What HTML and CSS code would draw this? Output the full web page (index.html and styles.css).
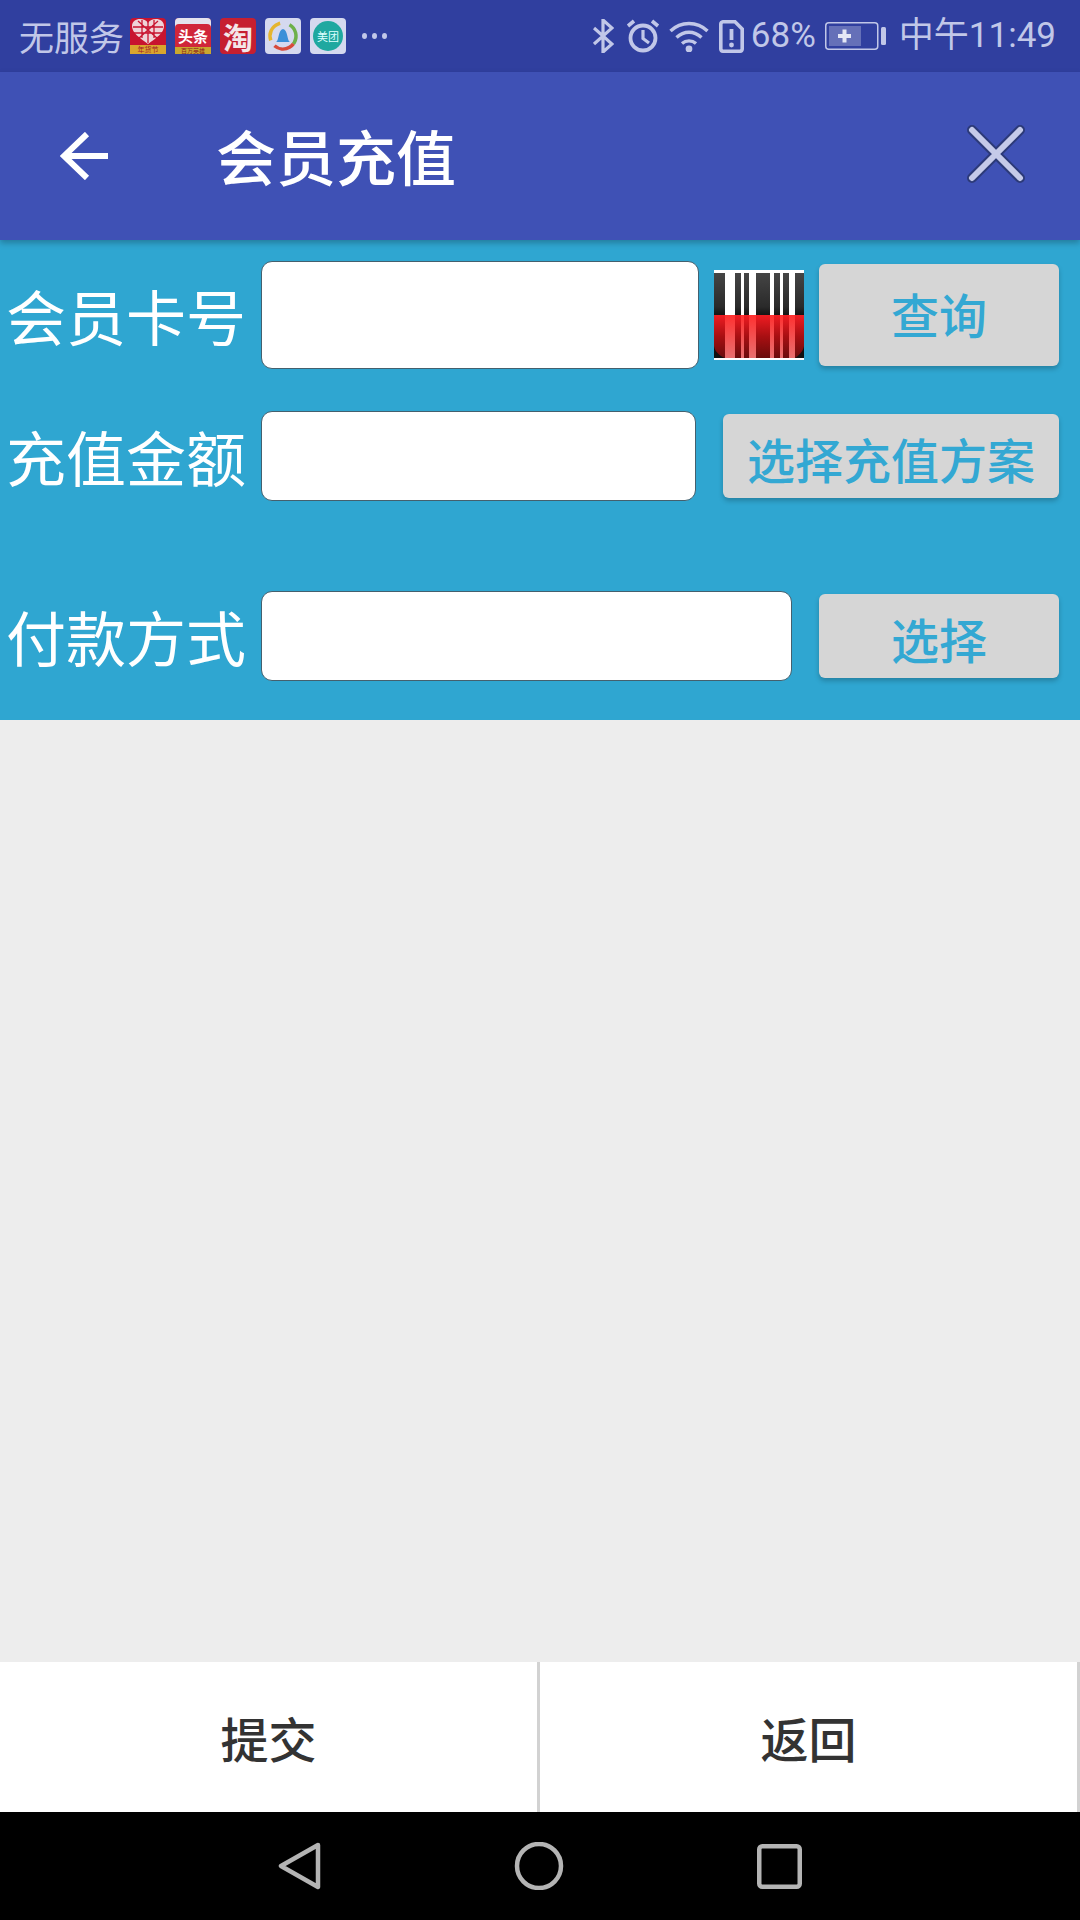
FILE: index.html
```html
<!DOCTYPE html>
<html lang="zh">
<head>
<meta charset="utf-8">
<title>会员充值</title>
<link rel="stylesheet" href="styles.css">
</head>
<body>
<div class="app">
  <header class="status">
    <div class="status-left">
      <span class="carrier">无服务</span>
      <div class="apps">
        <div class="app-icon ic-heart">
          <svg class="heart" viewBox="0 0 36 27"><path d="M18 26C10 20 2 15 2 8C2 3.500 6 1 10 1C13.500 1 16.500 2.500 18 5C19.500 2.500 22.500 1 26 1C30 1 34 3.500 34 8C34 15 26 20 18 26Z" fill="#efd3d8"/><path d="M18 3V25M3 9H33M8 3L28 21M28 3L8 21M3 15H33M12 2V20M24 2V20" stroke="#c8142f" stroke-width="1.300" fill="none"/></svg>
          <span class="heart-strip">年货节</span>
        </div>
        <div class="app-icon ic-toutiao">
          <span class="tt-main">头条</span>
          <span class="tt-strip">百万英雄</span>
        </div>
        <div class="app-icon ic-taobao"><span>淘</span></div>
        <div class="app-icon ic-news">
          <svg viewBox="0 0 36 36"><circle cx="18" cy="18" r="13" fill="none" stroke="#6db04a" stroke-width="3.500" stroke-dasharray="22 60" transform="rotate(-60 18 18)"/><circle cx="18" cy="18" r="13" fill="none" stroke="#e5b52f" stroke-width="3.500" stroke-dasharray="22 60" transform="rotate(160 18 18)"/><circle cx="18" cy="18" r="13" fill="none" stroke="#d84a3a" stroke-width="3.500" stroke-dasharray="16 60" transform="rotate(60 18 18)"/><path d="M11 24C14 23 13 12 18 11C23 12 22 23 25 24Z" fill="#3a8fd8"/></svg>
        </div>
        <div class="app-icon ic-meituan"><span class="mt-disc">美团</span></div>
      </div>
      <div class="dots"><i></i><i></i><i></i></div>
    </div>
    <div class="status-right">
      <svg class="s-bt" viewBox="0 0 21 34"><path d="M1 9L19 25L10 33V1L19 9L1 25" fill="none" stroke="#c1c7e8" stroke-width="3.200"/></svg>
      <svg class="s-alarm" viewBox="0 0 34 34"><circle cx="17" cy="19" r="12.500" fill="none" stroke="#c1c7e8" stroke-width="3.800"/><path d="M17 11V19.500L23 24" fill="none" stroke="#c1c7e8" stroke-width="3.200"/><path d="M2 7L8 2M32 7L26 2" stroke="#c1c7e8" stroke-width="3.600" fill="none"/></svg>
      <svg class="s-wifi" viewBox="0 0 40 32"><path d="M1.500 11C12 1 28 1 38.500 11M7.500 17.500C15 10.500 25 10.500 32.500 17.500M13 23.500C17 20 23 20 27 23.500" fill="none" stroke="#c1c7e8" stroke-width="3.400"/><circle cx="20" cy="29" r="3.400" fill="#c1c7e8"/></svg>
      <svg class="s-sim" viewBox="0 0 25 33"><path d="M1.800 4A2.500 2.500 0 0 1 4 1.800H16L23.200 9V29A2.500 2.500 0 0 1 21 31.200H4A2.500 2.500 0 0 1 1.800 29Z" fill="none" stroke="#c1c7e8" stroke-width="3.600"/><path d="M12.500 9V20" stroke="#c1c7e8" stroke-width="3.800"/><circle cx="12.500" cy="25" r="2.400" fill="#c1c7e8"/></svg>
      <span class="s-pct">68%</span>
      <svg class="s-batt" viewBox="0 0 61 28"><rect x="0.750" y="0.750" width="52" height="26.500" rx="3" fill="none" stroke="#c1c7e8" stroke-width="1.500"/><rect x="4" y="4" width="32" height="20" fill="#6570b8"/><path d="M19.500 7.500V20.500M13 14H26" stroke="#e4e7f6" stroke-width="4"/><rect x="56" y="5" width="5" height="18" rx="1.500" fill="#c1c7e8"/></svg>
      <span class="s-time">中午11:49</span>
    </div>
  </header>

  <div class="toolbar">
    <svg class="back" viewBox="0 0 48 48"><path d="M27 2L4 24L27 46M4 24H48" fill="none" stroke="#fff" stroke-width="6"/></svg>
    <h1 class="title">会员充值</h1>
    <svg class="close" viewBox="0 0 58 58"><path d="M5 5L53 53M53 5L5 53" fill="none" stroke="#2c3a78" stroke-width="10" stroke-linecap="round"/><path d="M5 5L53 53M53 5L5 53" fill="none" stroke="#c5cae9" stroke-width="6" stroke-linecap="round"/></svg>
  </div>

  <section class="form">
    <div class="row row-card">
      <label class="label">会员卡号</label>
      <input class="field field-card" type="text">
      <svg class="barcode" viewBox="0 0 90 90">
        <defs>
          <linearGradient id="barTop" x1="0" y1="0" x2="0" y2="1"><stop offset="0" stop-color="#454545"/><stop offset="0.800" stop-color="#2a2a2a"/><stop offset="1" stop-color="#141414"/></linearGradient>
          <linearGradient id="barRed" x1="0" y1="0" x2="0" y2="1"><stop offset="0" stop-color="#f01c22"/><stop offset="0.500" stop-color="#a80f12"/><stop offset="1" stop-color="#6a0c0c"/></linearGradient>
          <linearGradient id="pink" x1="0" y1="0" x2="0" y2="1"><stop offset="0" stop-color="#ff3030"/><stop offset="1" stop-color="#e87070"/></linearGradient>
        </defs>
        <rect width="90" height="90" fill="#fff"/>
        <g class="bars">
          <g fill="url(#barTop)">
            <rect y="3" width="11" height="42"/><rect x="21" y="3" width="6" height="42"/><rect x="30" y="3" width="5" height="42"/><rect x="42" y="3" width="14" height="42"/><rect x="60" y="3" width="6" height="42"/><rect x="69" y="3" width="6" height="42"/><rect x="81" y="3" width="9" height="42"/>
          </g>
          <rect y="45" width="90" height="43" fill="url(#pink)"/>
          <g fill="url(#barRed)">
            <rect y="45" width="11" height="43"/><rect x="21" y="45" width="6" height="43"/><rect x="30" y="45" width="5" height="43"/><rect x="42" y="45" width="14" height="43"/><rect x="60" y="45" width="6" height="43"/><rect x="69" y="45" width="6" height="43"/><rect x="81" y="45" width="9" height="43"/>
          </g>
          <path d="M0 76C1 82 6 86 11 88H0ZM90 76C89 82 84 86 81 88H90Z" fill="#111"/>
        </g>
      </svg>
      <button class="btn btn-query">查询</button>
    </div>
    <div class="row row-amount">
      <label class="label">充值金额</label>
      <input class="field field-amount" type="text">
      <button class="btn btn-plan">选择充值方案</button>
    </div>
    <div class="row row-pay">
      <label class="label">付款方式</label>
      <input class="field field-pay" type="text">
      <button class="btn btn-choose">选择</button>
    </div>
  </section>

  <main class="content"></main>

  <div class="actions">
    <button class="action">提交</button>
    <button class="action">返回</button>
  </div>

  <nav class="nav">
    <svg class="nav-back" viewBox="0 0 44 48"><path d="M40 3L3 24L40 45Z" fill="none" stroke="#b4b4b4" stroke-width="4.500" stroke-linejoin="round"/></svg>
    <svg class="nav-home" viewBox="0 0 50 48"><circle cx="25" cy="24" r="22" fill="none" stroke="#b4b4b4" stroke-width="4.500"/></svg>
    <svg class="nav-recent" viewBox="0 0 45 45"><rect x="2.250" y="2.250" width="40.500" height="40.500" rx="3" fill="none" stroke="#b4b4b4" stroke-width="4.500"/></svg>
  </nav>
</div>
</body>
</html>
```
FILE: styles.css
```css
* { box-sizing: border-box; }
html, body { margin: 0; padding: 0; }
body { font-family: "Noto Sans CJK SC", "Noto Sans", sans-serif; background: #ededed; }
.app { width: 1080px; height: 1920px; display: flex; flex-direction: column; overflow: hidden; }

.status { height: 72px; flex: none; background: #303f9f; color: #c1c7e8; display: flex; justify-content: space-between; align-items: center; padding: 0 24px 0 19px; }
.status-left, .status-right { display: flex; align-items: center; }
.carrier { font-size: 35px; line-height: 72px; width: 111px; white-space: nowrap; }
.apps { display: flex; gap: 9px; }
.app-icon { width: 36px; height: 36px; border-radius: 4px; display: flex; flex-direction: column; align-items: center; }
.app-icon svg { width: 36px; height: 36px; display: block; }
.ic-heart { background: #c8142f; }
.app-icon .heart { height: 27px; flex: none; }
.heart-strip { flex: none; width: 100%; height: 9px; background: #d9a62e; color: #a3152a; font-size: 7px; line-height: 9px; text-align: center; }
.ic-toutiao { background: #d0263a; padding-top: 6px; box-shadow: inset 0 6px 0 #e3e3ee; }
.tt-main { flex: none; font-size: 15px; line-height: 23px; height: 23px; font-weight: 700; color: #fff; white-space: nowrap; }
.tt-strip { flex: none; height: 7px; width: 100%; background: #c9a72f; color: #8c1c1c; font-size: 6px; line-height: 7px; text-align: center; white-space: nowrap; }
.ic-taobao { background: #c61f30; justify-content: center; }
.ic-taobao span { color: #f4e6e8; font-size: 30px; line-height: 36px; font-weight: 700; }
.ic-news { background: #d5d9ef; }
.ic-meituan { background: #d5d9ef; justify-content: center; }
.mt-disc { width: 30px; height: 30px; border-radius: 50%; background: #1fa8a0; color: #dff; font-size: 11px; line-height: 30px; text-align: center; white-space: nowrap; }
.dots { display: flex; gap: 5px; margin-left: 16px; }
.dots i { width: 5px; height: 6px; border-radius: 50%; background: #c1c7e8; display: block; }
.s-bt { width: 21px; height: 34px; }
.s-alarm { width: 34px; height: 34px; margin-left: 12px; }
.s-wifi { width: 40px; height: 32px; margin-left: 9px; }
.s-sim { width: 25px; height: 33px; margin-left: 10px; }
.s-pct { font-size: 35px; line-height: 72px; margin-left: 7px; font-family: Roboto, sans-serif; width: 66px; white-space: nowrap; }
.s-batt { width: 61px; height: 28px; margin-left: 8px; }
.s-time { font-size: 35px; line-height: 72px; margin-left: 13px; font-family: Roboto, "Noto Sans CJK SC", sans-serif; white-space: nowrap; }

.toolbar { height: 168px; flex: none; background: #3f51b5; display: flex; align-items: center; padding: 0 55px 0 60px; position: relative; box-shadow: 0 3px 6px rgba(0,0,0,.25); }
.back { width: 48px; height: 48px; }
.title { margin: -2px 0 0 108px; font-size: 60px; line-height: 80px; font-weight: 500; color: #fff; flex: 1; }
.close { width: 58px; height: 58px; margin-top: -4px; }

.form { height: 480px; flex: none; background: #2fa6d1; padding-top: 21px; }
.row { display: flex; align-items: center; }
.row-card { height: 108px; }
.row-amount { height: 90px; margin-top: 42px; }
.row-pay { height: 90px; margin-top: 90px; }
.label { flex: none; width: 261px; padding-left: 6px; font-size: 60px; line-height: 80px; color: #fff; white-space: nowrap; }
.field { display: block; height: 100%; padding: 0; background: #fff; border: 1px solid #44606e; border-radius: 11px; outline: 0; }
.field-card { width: 438px; }
.field-amount { width: 435px; }
.field-pay { width: 531px; }
.barcode { width: 90px; height: 90px; flex: none; margin-left: 15px; }
.bars { filter: blur(0.7px); }
.btn { display: block; border: 0; padding: 0; background: #d6d6d6; color: #33a8d3; border-radius: 6px; font-family: inherit; font-size: 48px; font-weight: 500; line-height: 60px; box-shadow: 0 3px 5px rgba(0,0,0,.22); white-space: nowrap; }
.btn-query { width: 240px; height: 102px; margin-left: 15px; padding-bottom: 5px; }
.btn-plan { width: 336px; height: 84px; margin-left: 27px; padding-top: 3px; }
.btn-choose { width: 240px; height: 84px; margin-left: 27px; padding-top: 3px; }

.content { flex: 1; background: #ededed; }

.actions { height: 150px; flex: none; display: flex; background: #fff; }
.action { flex: 1; height: 100%; border: 0; border-right: 3px solid #d2d2d2; padding: 0; background: #fff; color: #333; font-family: inherit; font-size: 48px; font-weight: 500; }

.nav { height: 108px; flex: none; background: #000; display: flex; align-items: center; padding-left: 278px; }
.nav-back { width: 44px; height: 48px; }
.nav-home { width: 50px; height: 48px; margin-left: 192px; }
.nav-recent { width: 45px; height: 45px; margin-left: 193px; }
```
